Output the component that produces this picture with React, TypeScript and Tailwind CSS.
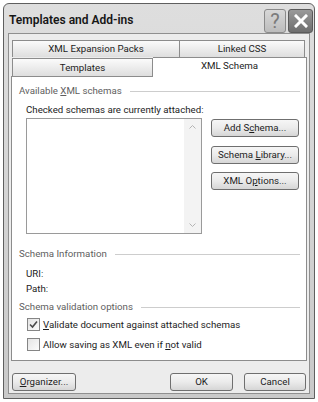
import { ReactNode } from "react";

const font = { fontFamily: "Roboto, 'Liberation Sans', sans-serif" };

const Btn = ({ children, className = "" }: { children: ReactNode; className?: string }) => (
  <div
    className={
      "flex h-[18px] items-center justify-center rounded-[3px] border border-[#6f6f6f] bg-gradient-to-b from-[#f6f6f6] via-[#ebebeb] to-[#d6d6d6] text-[9.7px] leading-[12px] text-[#1c1c1c] " +
      className
    }
  >
    <span>{children}</span>
  </div>
);

const Section = ({ label, className = "" }: { label: ReactNode; className?: string }) => (
  <div className={"flex h-[12px] items-center gap-[8px] pr-[6px] " + className}>
    <span className="text-[9.7px] leading-[12px] text-[#5e5e5e]">{label}</span>
    <div className="h-px flex-1 bg-[#cdcdcd]" />
  </div>
);

const Check = ({ checked }: { checked?: boolean }) => (
  <div className="flex h-[13px] w-[13px] items-center justify-center border border-[#858585] bg-gradient-to-br from-[#e4e4e4] to-[#fbfbfb]">
    {checked && (
      <svg width="9" height="9" viewBox="0 0 9 9">
        <path d="M1 4.5 L3.5 7 L8 1.5" fill="none" stroke="#4a4a4a" strokeWidth="1.6" />
      </svg>
    )}
  </div>
);

const u = (s: string) => <span className="underline underline-offset-[1px]">{s}</span>;

const txt = "text-[9.7px] leading-[12px] text-[#1c1c1c]";

export default function App() {
  return (
    <div className="h-[402px] w-[318px] bg-white pl-[3px] pt-[3px]" style={font}>
      <div className="flex h-[396px] w-[312px] flex-col rounded-t-[6px] border border-[#5f5f5f] bg-gradient-to-b from-[#dedede] to-[#c9c9c9] px-[4px] pb-[4px]">
        <div className="flex h-[29px] items-center justify-between">
          <span className="pl-[1px] pt-[2px] text-[12px] font-semibold text-[#161616]">Templates and Add-ins</span>
          <div className="-mr-[3px] flex items-end gap-[2px] self-end">
            <div className="flex h-[24px] w-[22px] items-center justify-center rounded-[3px] border border-[#8a8a8a] bg-gradient-to-b from-[#d8d8d8] to-[#bcbcbc] text-[20px] leading-none text-[#7b7b7b]">
              ?
            </div>
            <div className="flex h-[24px] w-[25px] items-center justify-center rounded-[3px] border border-[#5a5a5a] bg-gradient-to-b from-[#9a9a9a] to-[#6e6e6e]">
              <svg width="14" height="14" viewBox="0 0 14 14">
                <path d="M2 2 L12 12 M12 2 L2 12" stroke="white" strokeWidth="3" strokeLinecap="square" />
              </svg>
            </div>
          </div>
        </div>

        <div className="flex flex-1 flex-col border border-[#8f8f8f] bg-[#ececec] px-[2px] pt-[6px]">
          <div className={"ml-[1px] flex h-[17px] " + txt}>
            <div className="flex w-[168px] items-center justify-center border border-b-0 border-[#8c8c8c] bg-gradient-to-b from-[#fbfbfb] to-[#dedede]">
              XML Expansion Packs
            </div>
            <div className="flex w-[125px] items-center justify-center border border-b-0 border-l-0 border-[#8c8c8c] bg-gradient-to-b from-[#fbfbfb] to-[#dedede]">
              Linked CSS
            </div>
          </div>
          <div className={"ml-[1px] flex h-[19px] " + txt}>
            <div className="mt-[1px] flex w-[141px] items-center justify-center border border-b-0 border-[#8c8c8c] bg-gradient-to-b from-[#fbfbfb] to-[#dedede]">
              Templates
            </div>
            <div className="relative z-10 -mb-px flex w-[154px] items-start justify-center border border-b-0 border-l-0 border-[#8c8c8c] bg-white pt-[2px]">
              XML Schema
            </div>
          </div>

          <div className="flex h-[285px] shrink-0 flex-col border border-[#8c8c8c] bg-white pl-[7px]">
            <Section className="mt-[8px]" label={<>Available {u("X")}ML schemas</>} />
            <div className={"mt-[7px] pl-[7px] " + txt}>Checked schemas are currently attached:</div>
            <div className="mt-[2px] flex pl-[7px]">
              <div className="flex h-[116px] w-[176px] border border-[#9a9a9a] bg-white">
                <div className="flex-1" />
                <div className="flex w-[17px] flex-col items-center justify-between bg-[#f3f3f3] py-[6px]">
                  <svg width="7" height="4" viewBox="0 0 7 4">
                    <path d="M0.5 3.5 L3.5 0.5 L6.5 3.5" fill="none" stroke="#b4b4b4" />
                  </svg>
                  <svg width="7" height="4" viewBox="0 0 7 4">
                    <path d="M0.5 0.5 L3.5 3.5 L6.5 0.5" fill="none" stroke="#b4b4b4" />
                  </svg>
                </div>
              </div>
              <div className="ml-[9px] flex w-[88px] flex-col gap-[8.5px] pt-px">
                <Btn>Add S{u("c")}hema...</Btn>
                <Btn>Schema {u("L")}ibrary...</Btn>
                <Btn>XML O{u("p")}tions...</Btn>
              </div>
            </div>

            <Section className="mt-[14px]" label="Schema Information" />
            <div className={"mt-[8px] pl-[7px] " + txt}>URI:</div>
            <div className={"mt-[3px] pl-[7px] " + txt}>Path:</div>
            <Section className="mt-[6px]" label="Schema validation options" />
            <div className={"mt-[5px] flex h-[13px] items-center gap-[3px] pl-[8px] " + txt}>
              <Check checked />
              <span>{u("V")}alidate document against attached schemas</span>
            </div>
            <div className={"mt-[7px] flex h-[13px] items-center gap-[3px] pl-[8px] " + txt}>
              <Check />
              <span>Allow saving as XML even if {u("n")}ot valid</span>
            </div>
          </div>

          <div className="mt-[12px] flex pl-[1px] pr-[1px]">
            <Btn className="w-[64px]">{u("O")}rganizer...</Btn>
            <div className="flex-1" />
            <Btn className="w-[63px] border-[#4f4f4f]">OK</Btn>
            <Btn className="ml-[11px] w-[62px]">Cancel</Btn>
          </div>
        </div>
      </div>
    </div>
  );
}
